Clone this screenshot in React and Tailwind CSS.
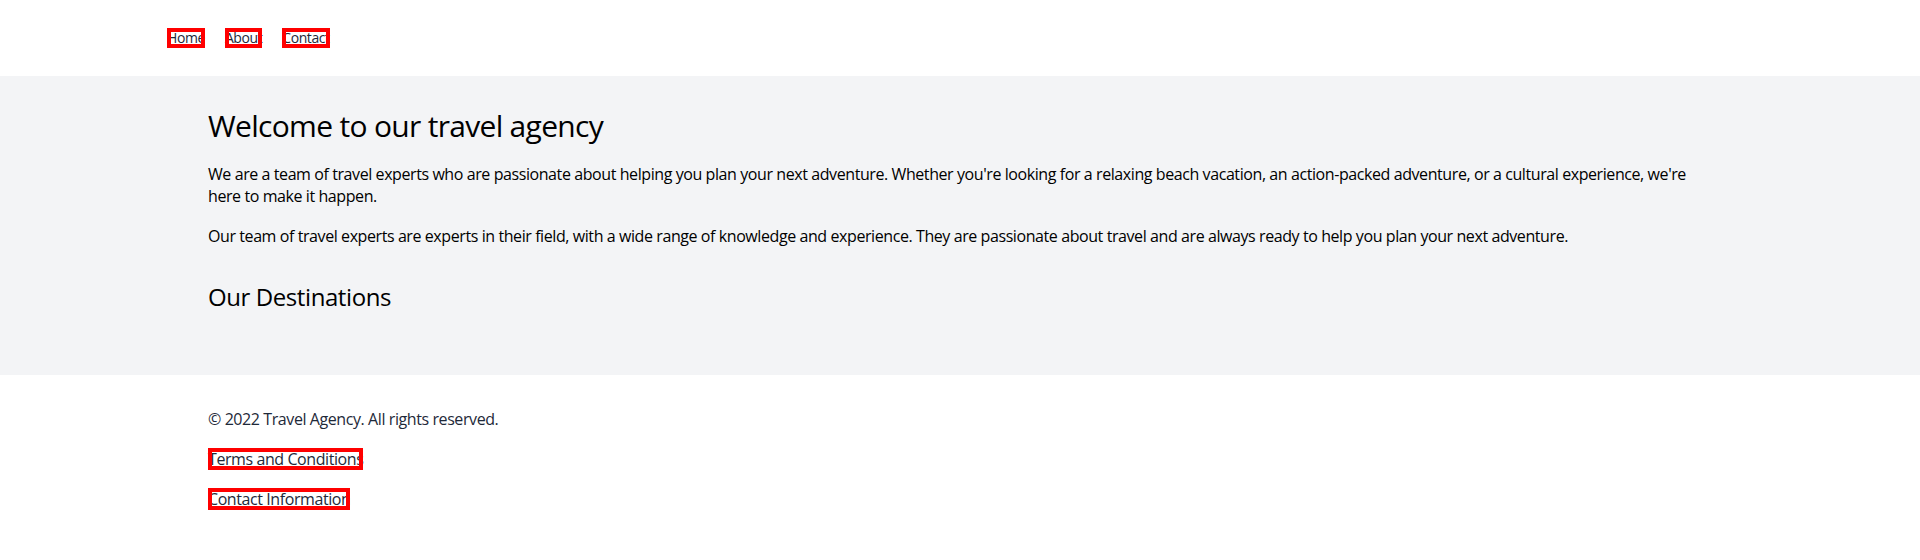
import React from 'react';

const Marked = ({ children, className = '' }) => (
    <a href="#" className={`relative block whitespace-nowrap ${className}`}>
        {children}
        <span className="pointer-events-none absolute inset-0 border-4 border-[#ff0000]" />
    </a>
);

const App = () => {
    return (
        <div className="min-h-[560px] bg-white font-['Open_Sans',sans-serif] tracking-[-0.026em] text-black">
            {/* Nav */}
            <nav className="py-7">
                <ul className="mx-auto flex max-w-[1586px] gap-5">
                    {['Home', 'About', 'Contact'].map((item) => (
                        <li key={item} className="flex">
                            <Marked className="text-sm leading-5 text-gray-800">{item}</Marked>
                        </li>
                    ))}
                </ul>
            </nav>

            {/* Main */}
            <section className="bg-gray-100">
                <div className="mx-auto max-w-[1536px] px-4 pt-8 pb-[62px]">
                    <h1 className="mb-[19px] text-3xl leading-9 tracking-[-0.023em]">Welcome to our travel agency</h1>
                    <p className="mb-[18px] leading-[22px]">
                        We are a team of travel experts who are passionate about helping you plan your next adventure. Whether you're looking for a relaxing beach vacation, an action-packed adventure, or a cultural experience, we're here to make it happen.
                    </p>
                    <p className="leading-[22px]">
                        Our team of travel experts are experts in their field, with a wide range of knowledge and experience. They are passionate about travel and are always ready to help you plan your next adventure.
                    </p>
                    <h2 className="mt-[34px] text-2xl leading-8">Our Destinations</h2>
                </div>
            </section>

            {/* Footer */}
            <footer className="mx-auto max-w-[1536px] px-4 pt-[33px] text-gray-800">
                <div className="flex flex-col items-start gap-[18px] leading-[22px]">
                    <p>© 2022 Travel Agency. All rights reserved.</p>
                    <Marked>Terms and Conditions</Marked>
                    <Marked>Contact Information</Marked>
                </div>
            </footer>
        </div>
    );
};

export default App;
